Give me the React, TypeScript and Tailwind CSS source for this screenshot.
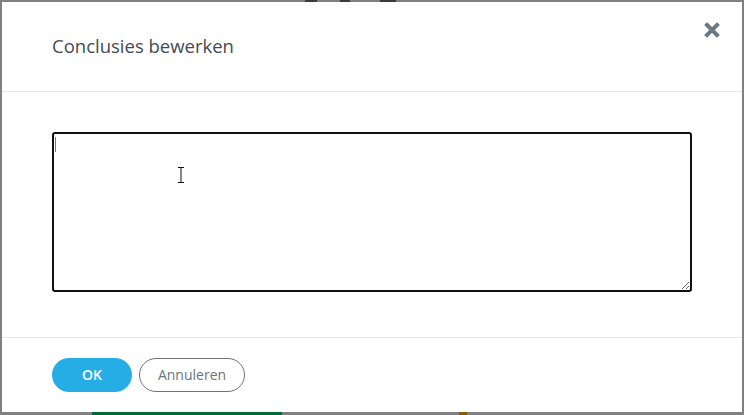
import React from 'react';

const font = { fontFamily: '"Open Sans", "Noto Sans", sans-serif' };

const CloseIcon = () => (
  <svg width="16" height="16" viewBox="0 0 16 16" className="block">
    <path d="M3 3 L13 13 M13 3 L3 13" stroke="#6b7785" strokeWidth="4" strokeLinecap="square" />
  </svg>
);

const IBeam = () => (
  <svg width="8" height="16" viewBox="0 0 8 16" className="block">
    <path d="M1 0.5 H7 M4 0.5 V15.5 M1 15.5 H7" stroke="#111" strokeWidth="1" fill="none" />
  </svg>
);

const App = () => {
  return (
    <div className="relative w-[744px] h-[415px] bg-[#808080] overflow-hidden pl-[2px] pt-[2px]" style={font}>
      {/* dimmed page peeking out behind the modal */}
      <div className="absolute left-[305px] top-0 w-[12px] h-[2px] bg-[#3a3a3a]" />
      <div className="absolute left-[340px] top-0 w-[10px] h-[2px] bg-[#3a3a3a]" />
      <div className="absolute left-[380px] top-0 w-[16px] h-[2px] bg-[#3a3a3a]" />
      <div className="absolute left-[92px] bottom-0 w-[190px] h-[3px] bg-[#006b35]" />
      <div className="absolute left-[459px] bottom-0 w-[8px] h-[3px] bg-[#8a5a00]" />

      <div className="relative w-[740px] h-[410px] bg-white flex flex-col">
        {/* Header */}
        <div className="h-[90px] border-b border-[#e8e8e8] flex justify-between pl-[50px] pr-[22px]">
          <h4 className="self-center text-[18.5px] font-medium text-[#454b52] leading-none -mt-[1px]">
            Conclusies bewerken
          </h4>
          <button className="self-start mt-[20px]">
            <CloseIcon />
          </button>
        </div>

        {/* Body */}
        <div className="relative px-[50px] pt-[40px] pb-[45px]">
          <textarea
            className="block w-full h-[160px] border-2 border-[#111] rounded-[3px] outline-none resize p-2 text-sm"
            style={{ caretColor: '#777' }}
          />
          {/* caret + mouse pointer overlay */}
          <div className="absolute left-[53px] top-[45px] w-[1px] h-[15px] bg-[#777]" />
          <div className="absolute left-[175px] top-[75px]">
            <IBeam />
          </div>
        </div>

        {/* Footer */}
        <div className="flex-1 border-t border-[#e8e8e8] flex items-center gap-[7px] pl-[50px] pb-[1px]">
          <button className="w-[80px] h-[34px] rounded-full bg-[#27ade5] text-white text-[14px] font-semibold">
            OK
          </button>
          <button className="w-[106px] h-[34px] rounded-full border border-[#6b747d] text-[#6b747d] text-[14px]">
            Annuleren
          </button>
        </div>
      </div>
    </div>
  );
};

export default App;
